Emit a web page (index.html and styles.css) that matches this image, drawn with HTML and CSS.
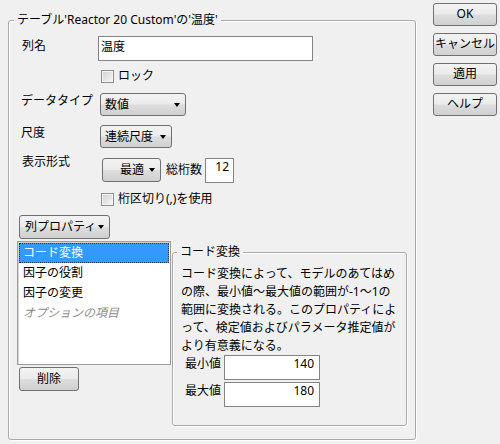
FILE: index.html
```html
<!DOCTYPE html>
<html lang="ja">
<head>
<meta charset="utf-8">
<link rel="stylesheet" href="styles.css">
</head>
<body>
<div class="group main">
  <span class="legend">テーブル'Reactor 20 Custom'の'温度'</span>
  <div class="row row-name">
    <span class="lbl w-name">列名</span>
    <div class="field name">温度</div>
  </div>
  <div class="row row-lock">
    <span class="check"></span><span class="check-label">ロック</span>
  </div>
  <div class="row row-type">
    <span class="lbl w-type">データタイプ</span>
    <div class="btn combo type"><span>数値</span><span class="arrow"></span></div>
  </div>
  <div class="row row-scale">
    <span class="lbl w-type">尺度</span>
    <div class="btn combo scale"><span>連続尺度</span><span class="arrow"></span></div>
  </div>
  <div class="row row-format">
    <span class="lbl w-format">表示形式</span>
    <div class="btn combo best"><span>最適</span><span class="arrow"></span></div>
    <span class="digits">総桁数</span>
    <div class="field num width">12</div>
  </div>
  <div class="row row-sep">
    <span class="check"></span><span class="check-label">桁区切り(,)を使用</span>
  </div>
  <div class="row row-props">
    <div class="btn combo props"><span>列プロパティ</span><span class="arrow"></span></div>
  </div>
  <div class="lower">
    <div class="left-col">
      <ul class="list">
        <li class="selected">コード変換</li>
        <li>因子の役割</li>
        <li>因子の変更</li>
        <li class="hint">オプションの項目</li>
      </ul>
      <div class="btn delete">削除</div>
    </div>
    <div class="group coding">
      <span class="legend">コード変換</span>
      <p class="desc">コード変換によって、モデルのあてはめ<br>の際、最小値～最大値の範囲が-1～1の<br>範囲に変換される。このプロパティによ<br>って、検定値およびパラメータ推定値が<br>より有意義になる。</p>
      <div class="range-row">
        <span class="range-lbl">最小値</span>
        <div class="field num range">140</div>
      </div>
      <div class="range-row">
        <span class="range-lbl">最大値</span>
        <div class="field num range">180</div>
      </div>
    </div>
  </div>
</div>
<div class="actions">
  <div class="btn action">OK</div>
  <div class="btn action">キャンセル</div>
  <div class="btn action">適用</div>
  <div class="btn action">ヘルプ</div>
</div>
</body>
</html>
```
FILE: styles.css
```css
* { box-sizing: border-box; }
html, body { margin: 0; padding: 0; }
body {
  width: 500px;
  height: 444px;
  overflow: hidden;
  background: #f0f0f0;
  color: #000;
  font-family: "Noto Sans", "Noto Sans CJK JP", sans-serif;
  font-size: 12px;
  line-height: 16px;
  display: flex;
  align-items: flex-start;
}

.group {
  position: relative;
  border: 1px solid #a9a9a9;
  border-radius: 3px;
  box-shadow: 1px 1px 0 #fff, inset 1px 1px 0 #fff;
}
.legend {
  position: absolute;
  top: -9px;
  left: 5px;
  padding: 0 3px;
  background: #f0f0f0;
  white-space: nowrap;
  line-height: 16px;
}

.main {
  margin: 20px 0 0 8px;
  width: 408px;
  height: 420px;
  padding: 15px 8px 0 8px;
}

.row { display: flex; align-items: flex-start; }
.lbl { flex: none; padding-left: 5px; }
.w-name { width: 81px; padding-top: 2px; }
.w-type { width: 83px; padding-left: 4px; }
.w-format { width: 85px; margin-top: -4px; }

.field {
  background: #fff;
  border: 1px solid #838383;
  padding: 2px 2px 0 2px;
  white-space: nowrap;
}
.field.name { width: 215px; height: 25px; }
.field.num { text-align: right; padding-right: 4px; }
.field.width { width: 29px; height: 25px; padding-top: 0; }
.field.range { width: 96px; height: 25px; padding-right: 5px; padding-top: 0; }

.row-lock { margin-top: 7px; padding-left: 84px; align-items: center; height: 16px; }
.row-sep { margin-top: 8px; padding-left: 84px; align-items: center; height: 16px; }
.check {
  width: 13px;
  height: 13px;
  border: 1px solid #8e8f8f;
  background: linear-gradient(135deg, #cdd0d4 0%, #e8e8e8 60%, #f6f6f6 100%);
  box-shadow: inset 0 0 0 1px #f4f4f4;
  flex: none;
}
.check-label { margin-left: 4px; }

.btn {
  border: 1px solid #707070;
  border-radius: 3px;
  background: linear-gradient(#f3f3f3 0%, #ebebeb 48%, #dddddd 52%, #d0d0d0 100%);
  white-space: nowrap;
}
.combo {
  display: flex;
  align-items: center;
  justify-content: space-between;
  padding: 0 5px 0 4px;
}
.arrow {
  width: 0;
  height: 0;
  border-left: 3.5px solid transparent;
  border-right: 3.5px solid transparent;
  border-top: 4px solid #000;
  flex: none;
}
.row-type { margin-top: 9px; }
.type { width: 86px; height: 23px; }
.row-scale { margin-top: 9px; }
.scale { width: 72px; height: 23px; }
.row-format { margin-top: 10px; }
.best { width: 59px; height: 24px; padding: 0 5px 0 17px; }
.digits { margin: 4px 3px 0 5px; }
.row-props { margin-top: 8px; padding-left: 2px; }
.props { width: 91px; height: 24px; padding-left: 5px; }

.lower { display: flex; align-items: flex-start; margin-top: 2px; }
.left-col { width: 154px; flex: none; }
.list {
  list-style: none;
  margin: 0;
  padding: 1px;
  width: 154px;
  height: 124px;
  background: #fff;
  border: 1px solid #9c9c9c;
  box-shadow: inset 1px 1px 0 #d4d4d4;
}
.list li {
  height: 20px;
  line-height: 18px;
  padding-left: 3px;
  border: 1px solid transparent;
  white-space: nowrap;
}
.list li.selected {
  background: #3399ff;
  color: #fff;
  border: 1px dotted #1a3a66;
}
.list li.hint { color: #8c8c8c; font-style: italic; }
.delete {
  margin: 2px 0 0 2px;
  width: 60px;
  height: 24px;
  text-align: center;
  line-height: 21px;
}

.coding {
  margin: 11px 0 0 1px;
  width: 235px;
  height: 174px;
  padding: 12px 0 0 8px;
}
.coding .legend { left: 4px; }
.desc {
  margin: 0;
  line-height: 18px;
  white-space: nowrap;
}
.range-row { display: flex; align-items: flex-start; margin-bottom: 2px; }
.range-lbl { width: 43px; padding-left: 4px; padding-top: 1px; flex: none; }

.actions {
  margin: 3px 0 0 17px;
  width: 64px;
  display: flex;
  flex-direction: column;
  gap: 7px;
}
.action {
  height: 23px;
  text-align: center;
  line-height: 20px;
}
```
